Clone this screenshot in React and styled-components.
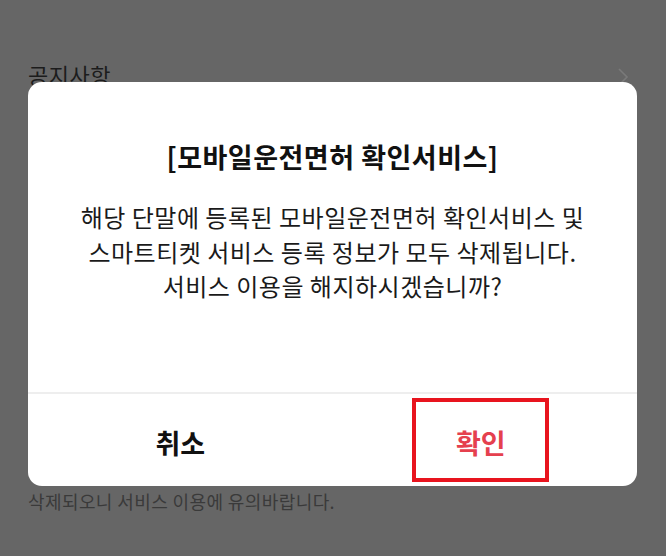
import React from "react";
import styled, { createGlobalStyle } from "styled-components";

const Global = createGlobalStyle`
  html, body { margin: 0; padding: 0; }
  body {
    font-family: "Noto Sans CJK KR", "Noto Sans", sans-serif;
    background: #666666;
  }
`;

const Page = styled.div`
  position: relative;
  width: 666px;
  height: 556px;
  overflow: hidden;
  background: #666666;
`;

const Behind = styled.div`
  display: flex;
  flex-direction: column;
  padding: 54px 28px 0 28px;
  height: 100%;
  box-sizing: border-box;
`;

const MenuRow = styled.div`
  display: flex;
  align-items: center;
  justify-content: space-between;
  height: 40px;
`;

const MenuLabel = styled.span`
  font-size: 22px;
  color: #1c1c1c;
  letter-spacing: 0.5px;
`;

const Chevron = styled.svg`
  width: 14px;
  height: 20px;
  margin-right: 8px;
  margin-top: 6px;
`;

const Note = styled.p`
  margin: auto 0 42px 0;
  font-size: 18px;
  color: #3a3a3a;
  letter-spacing: 0.4px;
`;

const Dialog = styled.div`
  position: absolute;
  left: 28px;
  top: 82px;
  width: 609px;
  height: 404px;
  background: #ffffff;
  border-radius: 14px;
  display: flex;
  flex-direction: column;
  overflow: hidden;
`;

const Body = styled.div`
  height: 310px;
  display: flex;
  flex-direction: column;
  align-items: center;
  padding-top: 56px;
  box-sizing: border-box;
`;

const Title = styled.h2`
  margin: 0;
  font-size: 27px;
  line-height: 38px;
  font-weight: 700;
  color: #111;
  letter-spacing: 0.5px;
`;

const Message = styled.p`
  margin: 24px 0 0 0;
  font-size: 24px;
  line-height: 34.5px;
  font-weight: 400;
  color: #1a1a1a;
  text-align: center;
  letter-spacing: 0.5px;
`;

const Actions = styled.div`
  flex: 1;
  display: grid;
  grid-template-columns: 1fr 1fr;
  border-top: 2px solid #eeeeee;
`;

const ActionButton = styled.button`
  border: 0;
  background: transparent;
  font-family: inherit;
  font-size: 27px;
  font-weight: 700;
  color: ${(p) => (p.$danger ? "#e5404e" : "#111111")};
  display: flex;
  align-items: center;
  justify-content: center;
  padding: 0;
  cursor: pointer;
`;

const Highlight = styled.span`
  display: flex;
  align-items: center;
  justify-content: center;
  width: 137px;
  height: 84px;
  box-sizing: border-box;
  border: 4px solid #e8141e;
  margin-right: 8px;
  padding-top: 4px;
`;

const Label = styled.span`
  padding-top: 4px;
`;

export default function App() {
  return (
    <>
      <Global />
      <Page>
        <Behind>
          <MenuRow>
            <MenuLabel>공지사항</MenuLabel>
            <Chevron viewBox="0 0 14 20" fill="none">
              <path d="M3 2 L11 10 L3 18" stroke="#7a7a7a" strokeWidth="1.6" />
            </Chevron>
          </MenuRow>
          <Note>삭제되오니 서비스 이용에 유의바랍니다.</Note>
        </Behind>
        <Dialog>
          <Body>
            <Title>[모바일운전면허 확인서비스]</Title>
            <Message>
              해당 단말에 등록된 모바일운전면허 확인서비스 및
              <br />
              스마트티켓 서비스 등록 정보가 모두 삭제됩니다.
              <br />
              서비스 이용을 해지하시겠습니까?
            </Message>
          </Body>
          <Actions>
            <ActionButton>
              <Label>취소</Label>
            </ActionButton>
            <ActionButton $danger>
              <Highlight>확인</Highlight>
            </ActionButton>
          </Actions>
        </Dialog>
      </Page>
    </>
  );
}
